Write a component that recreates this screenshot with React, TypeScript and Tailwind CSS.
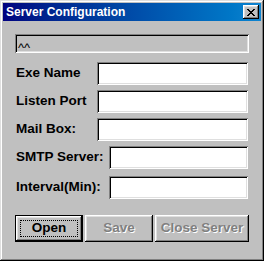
const raised =
  "shadow-[inset_-1px_-1px_#000000,inset_1px_1px_#ffffff,inset_-2px_-2px_#808080,inset_2px_2px_#dfdfdf]";
const sunken =
  "shadow-[inset_1px_1px_#808080,inset_-1px_-1px_#ffffff,inset_2px_2px_#000000,inset_-2px_-2px_#dfdfdf]";

function Field({ label, inputLeft, className }: { label: string; inputLeft: string; className: string }) {
  return (
    <div className={`flex items-center ${className}`}>
      <label className={`shrink-0 pl-[1px] text-[13.5px] font-bold text-black ${inputLeft}`}>{label}</label>
      <div className={`h-[23px] flex-1 bg-white ${sunken}`} />
    </div>
  );
}

function Button({ children, disabled, isDefault, className }: { children: string; disabled?: boolean; isDefault?: boolean; className: string }) {
  if (isDefault) {
    return (
      <div className={`h-[27px] border border-black ${className}`}>
        <button className={`flex h-full w-full items-center justify-center bg-[#c0c0c0] p-[4px] ${raised}`}>
          <span className="flex h-full w-full items-center justify-center border border-dotted border-black text-[13.5px] font-bold text-black">
            {children}
          </span>
        </button>
      </div>
    );
  }
  return (
    <button
      disabled={disabled}
      className={`flex h-[27px] items-center justify-center bg-[#c0c0c0] text-[13.5px] font-bold ${raised} ${
        disabled ? "text-[#808080] [text-shadow:1px_1px_#ffffff]" : "text-black"
      } ${className}`}
    >
      {children}
    </button>
  );
}

export default function App() {
  return (
    <div
      className="flex h-[261px] w-[264px] flex-col bg-[#c0c0c0] p-[3px] shadow-[inset_-1px_-1px_#000000,inset_1px_1px_#dfdfdf,inset_-2px_-2px_#808080,inset_2px_2px_#ffffff]"
      style={{ fontFamily: '"Liberation Sans", Arial, sans-serif' }}
    >
      <div className="flex h-[18px] shrink-0 items-center justify-between bg-gradient-to-r from-[#000080] to-[#1084d0] pl-[3px] pr-[2px]">
        <span className="text-[12px] font-bold leading-none text-white">Server Configuration</span>
        <button className={`flex h-[14px] w-[16px] items-center justify-center bg-[#c0c0c0] ${raised}`}>
          <svg width="8" height="7" viewBox="0 0 8 7" shapeRendering="crispEdges">
            <path
              d="M0 0h2v1H0zM6 0h2v1H6zM1 1h2v1H1zM5 1h2v1H5zM2 2h4v1H2zM3 3h2v1H3zM2 4h4v1H2zM1 5h2v1H1zM5 5h2v1H5zM0 6h2v1H0zM6 6h2v1H6z"
              fill="#000"
            />
          </svg>
        </button>
      </div>

      <div className="flex flex-1 flex-col pl-[12px] pr-[12px]">
        <div className={`mt-[13px] h-[19px] bg-[#c0c0c0] px-[3px] pt-[1px] ${sunken}`}>
          <span className="text-[13px] leading-none text-black">^^</span>
        </div>

        <Field label="Exe Name" inputLeft="w-[82px]" className="mt-[9px] mr-[1px]" />
        <Field label="Listen Port" inputLeft="w-[82px]" className="mt-[5px] mr-[1px]" />
        <Field label="Mail Box:" inputLeft="w-[82px]" className="mt-[5px] mr-[1px]" />
        <Field label="SMTP Server:" inputLeft="w-[94px]" className="mt-[5px] mr-[1px]" />
        <Field label="Interval(Min):" inputLeft="w-[94px]" className="mt-[7px] mr-[1px]" />

        <div className="mt-[16px] flex gap-[2px]">
          <Button isDefault className="w-[68px]">Open</Button>
          <Button disabled className="w-[68px]">Save</Button>
          <Button disabled className="w-[94px]">Close Server</Button>
        </div>
      </div>
    </div>
  );
}
